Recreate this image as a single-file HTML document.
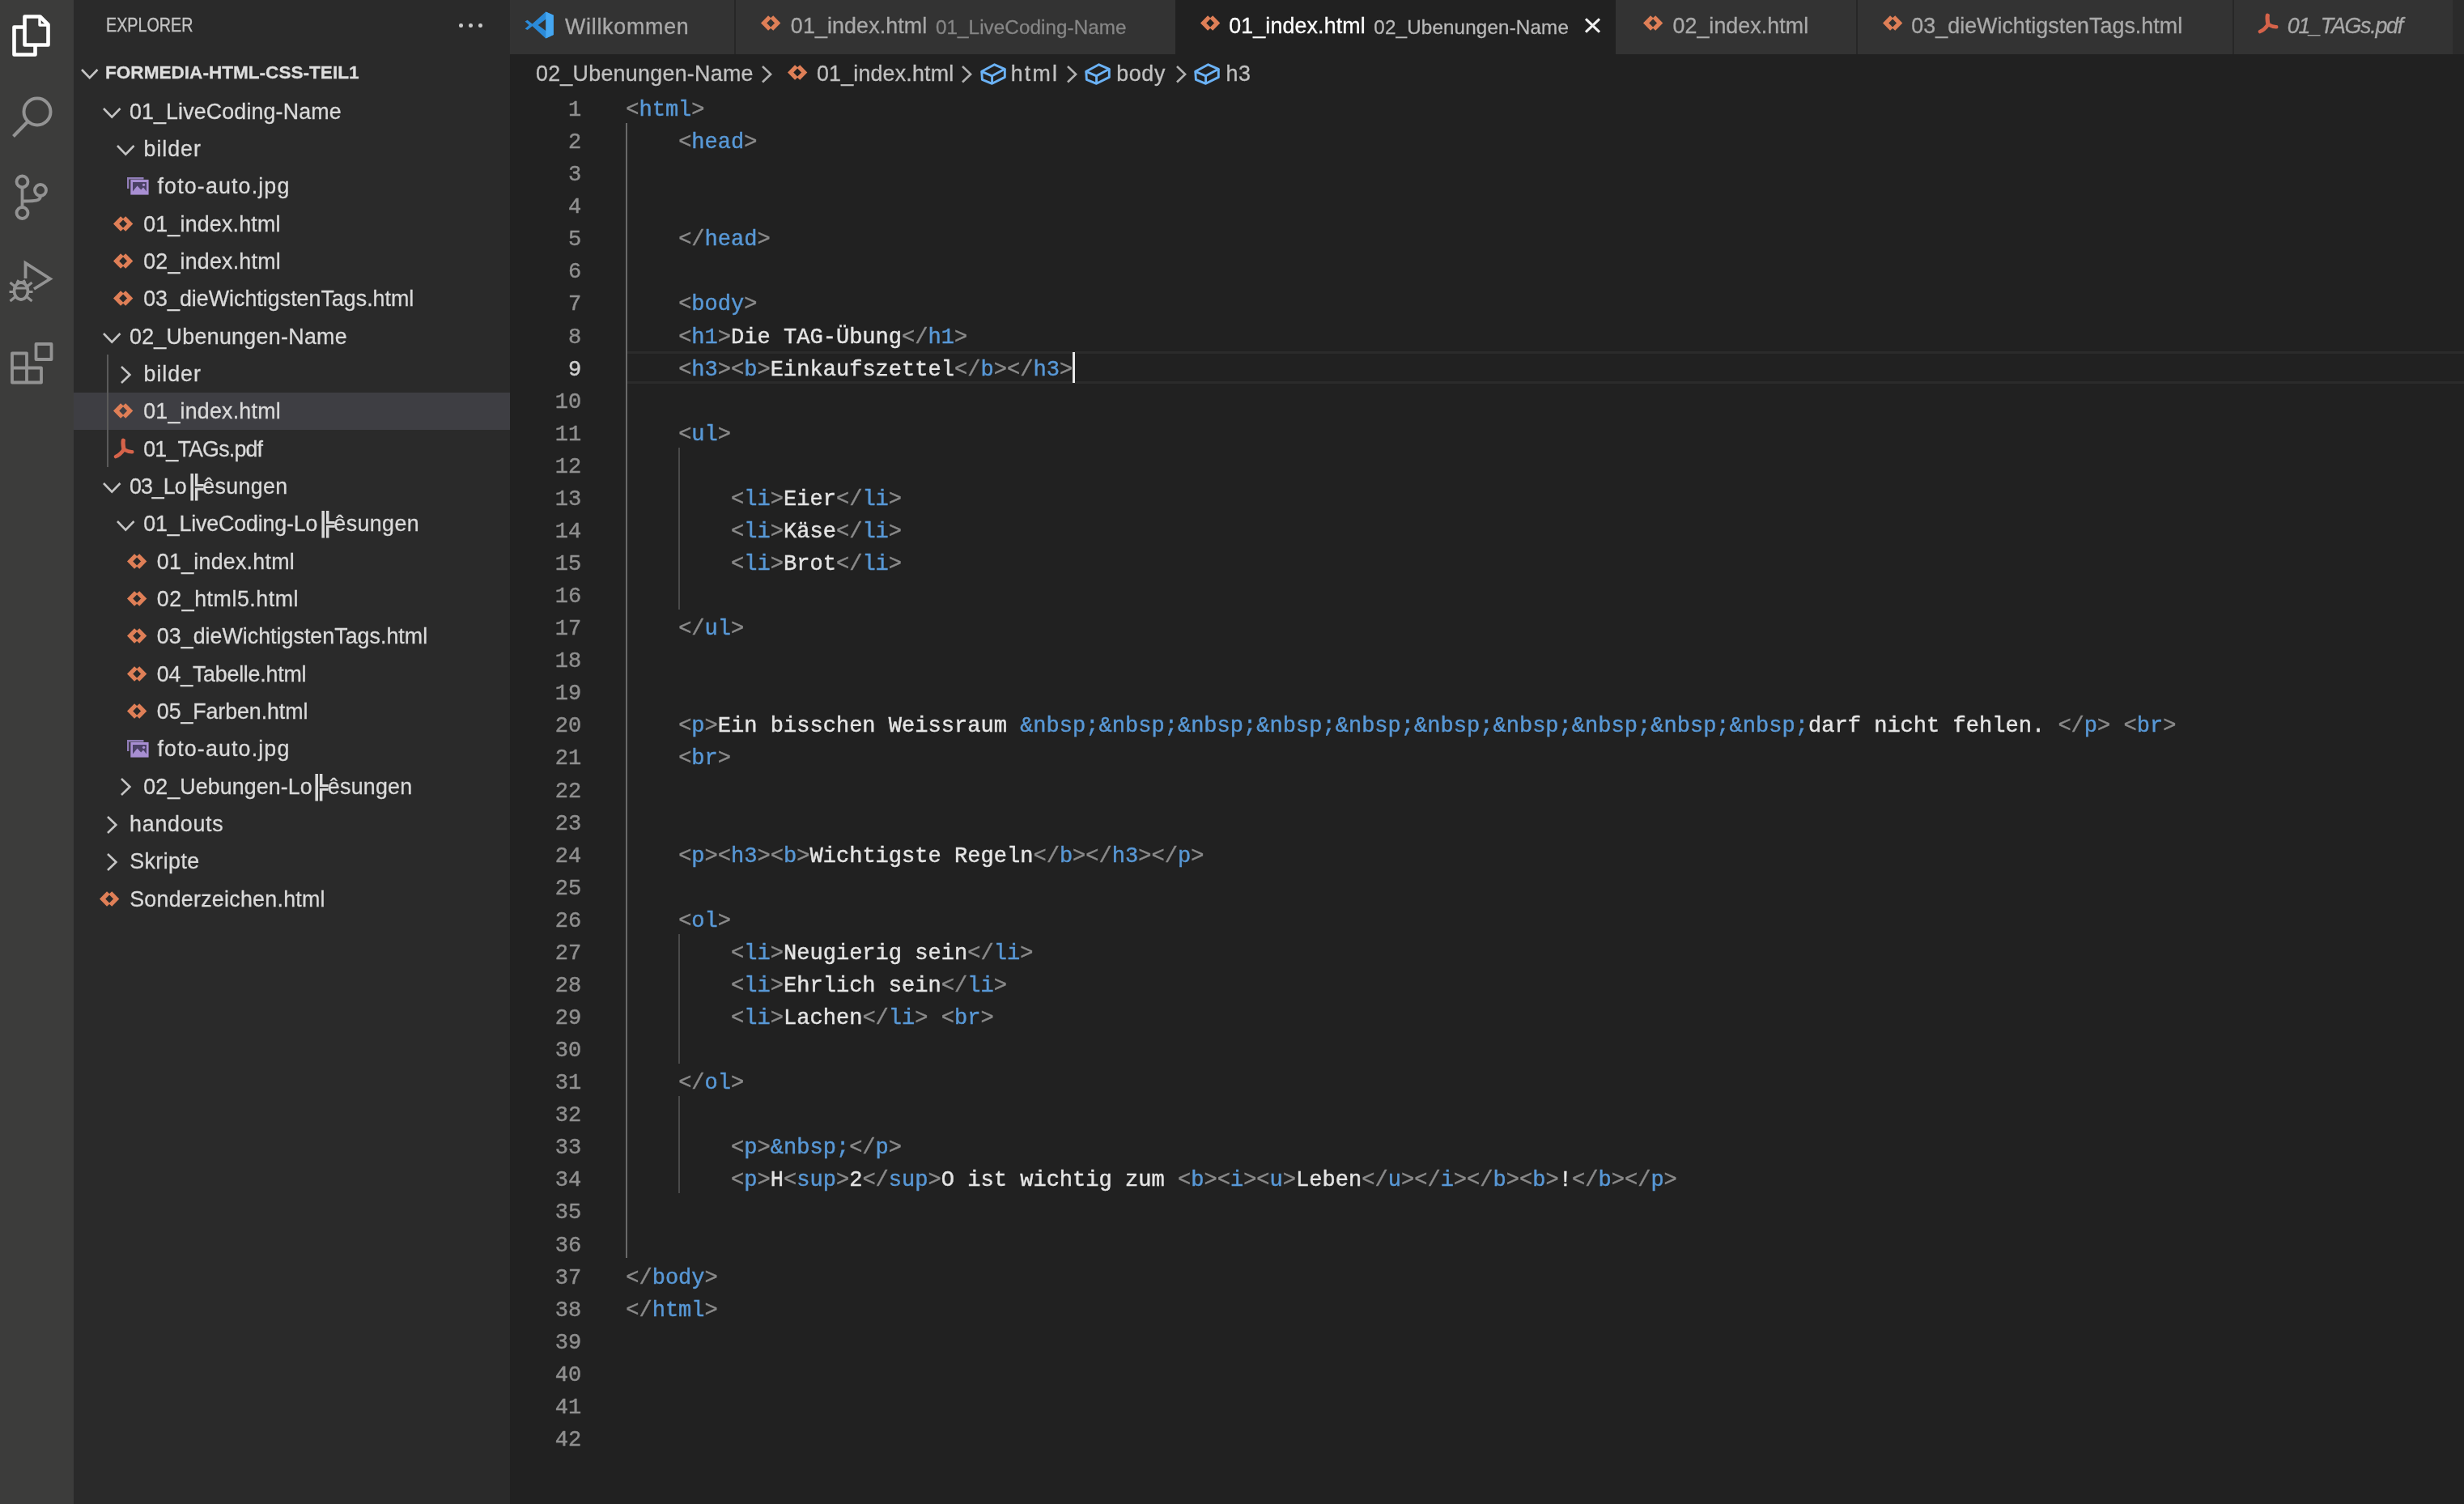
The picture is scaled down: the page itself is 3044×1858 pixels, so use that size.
<!DOCTYPE html>
<html lang="de"><head><meta charset="utf-8"><title>01_index.html - FORMEDIA-HTML-CSS-TEIL1 - Visual Studio Code</title>
<style>
html,body{margin:0;padding:0;background:#212121;overflow:hidden}
#root{position:relative;width:3044px;height:1858px;overflow:hidden;font-family:"Liberation Sans",sans-serif}
#soft{position:absolute;left:0;top:0;width:3044px;height:1858px;filter:blur(0.55px)}
.p,.i,.t,.m{position:absolute}
.i{overflow:visible}
.t{white-space:pre;font-family:"Liberation Sans",sans-serif;-webkit-text-stroke:0.3px currentColor}
.m{white-space:pre;-webkit-text-stroke:0.45px currentColor;font-family:"Liberation Mono",monospace;font-size:27.050px;line-height:40.07px}
.g{color:#8a8a8a}
.b{color:#5898d6}
.bx{position:absolute;display:inline-block;transform-origin:left center;-webkit-text-stroke:1.1px currentColor}
</style></head>
<body><div id="root"><div id="soft">
<div class="p" style="left:-20px;top:-20px;width:3084px;height:1898px;background:#212121"></div>
<div class="p" style="left:-20px;top:-20px;width:110.5px;height:1898px;background:#3c3c3b"></div>
<div class="p" style="left:90.5px;top:-20px;width:539.5px;height:1898px;background:#2a2a2a"></div>
<svg class="i" style="left:12px;top:15px" width="54" height="58" viewBox="0 0 54 58"><g fill="none" stroke="#ffffff" stroke-width="4.6" stroke-linejoin="round"><path d="M18.5 5.5 H37.5 L47.5 15.5 V40.5 H18.5 Z"/><path d="M37 5.5 V16 H47.5" stroke-width="3.4"/><path d="M18.5 18.5 H5.5 V52.5 H31.5 V40.5"/></g></svg>
<svg class="i" style="left:10px;top:114px" width="62" height="62" viewBox="0 0 62 62"><g fill="none" stroke="#939393" stroke-width="4"><circle cx="36" cy="24" r="16.5"/><path d="M24.5 36 L6.5 54.5"/></g></svg>
<svg class="i" style="left:12px;top:210px" width="56" height="68" viewBox="0 0 56 68"><g fill="none" stroke="#939393" stroke-width="3.8"><circle cx="15.5" cy="14.5" r="7"/><circle cx="15.5" cy="53" r="7"/><circle cx="38" cy="25" r="7"/><path d="M15.5 21.5 V46 M38 32 C38 39 30 38.5 15.5 38.5"/></g></svg>
<svg class="i" style="left:8px;top:318px" width="62" height="62" viewBox="0 0 62 62"><g fill="none" stroke="#939393" stroke-width="3.8" stroke-linejoin="miter"><path d="M23.5 26 V7 L54 26.5 L34 39"/><ellipse cx="18" cy="41.5" rx="8.5" ry="10.5"/><path d="M9.5 38 H26.5 M4.5 31 L10 35.5 M31.5 31 L26 35.5 M3.5 42.5 H9.5 M26.5 42.5 H32.5 M4.5 54 L10.5 49 M31.5 54 L25.5 49 M13 31.5 L15 28 M23 31.5 L21 28" stroke-width="3.2"/></g></svg>
<svg class="i" style="left:10px;top:420px" width="60" height="60" viewBox="0 0 60 60"><g fill="none" stroke="#939393" stroke-width="3.8" stroke-linejoin="round"><path d="M5 16.5 H23 V34.5 H41 V52.5 H5 Z M23 34.5 H5 M23 34.5 V52.5"/><rect x="34.5" y="5" width="19" height="19"/></g></svg>
<div class="t" style="left:130.78px;top:17.28px;font-size:23px;line-height:29.9px;color:#c4c4c4;transform:scaleX(0.8576);transform-origin:left center;">EXPLORER</div>
<div class="p" style="left:567.0px;top:29px;width:4.6px;height:4.6px;border-radius:50%;background:#c8c8c8"></div>
<div class="p" style="left:579.2px;top:29px;width:4.6px;height:4.6px;border-radius:50%;background:#c8c8c8"></div>
<div class="p" style="left:591.4px;top:29px;width:4.6px;height:4.6px;border-radius:50%;background:#c8c8c8"></div>
<svg class="i" style="left:97.50px;top:83.43px" width="25.50" height="16.14" viewBox="-3 -3 25.50 16.14"><path d="M0 0 L9.75 10.14 L19.50 0" fill="none" stroke="#c5c5c5" stroke-width="2.7"/></svg>
<div class="t" style="left:129.79px;top:75.48px;font-size:22.8px;line-height:29.64px;color:#dedede;transform:scaleX(0.9902);transform-origin:left center;font-weight:bold;">FORMEDIA-HTML-CSS-TEIL1</div>
<div class="p" style="left:90.5px;top:484.64px;width:539.5px;height:46.33px;background:#3e3e43"></div>
<div class="p" style="left:131.8px;top:438.31px;width:2px;height:138.99px;background:#5a5a5a"></div>
<svg class="i" style="left:124.50px;top:130.97px" width="26.50" height="16.66" viewBox="-3 -3 26.50 16.66"><path d="M0 0 L10.25 10.66 L20.50 0" fill="none" stroke="#c5c5c5" stroke-width="2.6"/></svg>
<div class="t" style="left:0;top:120.59px;font-size:26.8px;line-height:34.84px;color:#dadada"><span style="position:absolute;left:159.95px;letter-spacing:0.142px">01_LiveCoding-Name</span></div>
<svg class="i" style="left:141.50px;top:177.30px" width="26.50" height="16.66" viewBox="-3 -3 26.50 16.66"><path d="M0 0 L10.25 10.66 L20.50 0" fill="none" stroke="#c5c5c5" stroke-width="2.6"/></svg>
<div class="t" style="left:0;top:166.92px;font-size:26.8px;line-height:34.84px;color:#dadada"><span style="position:absolute;left:177.57px;letter-spacing:0.945px">bilder</span></div>
<svg class="i" style="left:156.60px;top:218.96px" width="26.6" height="21.6" viewBox="0 0 26.6 21.6"><path d="M0 0 H20.5 V2.6 H2.4 V14 H0 Z" fill="#8f7cb6"/><rect x="4.3" y="2.9" width="22.3" height="18.7" fill="#a88fd3"/><path d="M7 6 H24 V17.5 L20 12.6 L17.2 15.6 L12.6 10.4 L7 17.5 Z" fill="#4b4166"/><circle cx="20.6" cy="9.3" r="1.6" fill="#a88fd3"/></svg>
<div class="t" style="left:0;top:213.25px;font-size:26.8px;line-height:34.84px;color:#dadada"><span style="position:absolute;left:194.52px;letter-spacing:1.151px">foto-auto.jpg</span></div>
<svg class="i" style="left:140.20px;top:266.79px" width="24.3" height="18.8" viewBox="0 0 23.5 18.8" preserveAspectRatio="none"><path d="M10.6 1.9 L3.5 9.4 L10.6 16.9 M12.9 1.9 L20 9.4 L12.9 16.9" fill="none" stroke="#df7f57" stroke-width="5.1" stroke-linejoin="miter"/></svg>
<div class="t" style="left:0;top:259.58px;font-size:26.8px;line-height:34.84px;color:#dadada"><span style="position:absolute;left:177.15px;letter-spacing:0.207px">01_index.html</span></div>
<svg class="i" style="left:140.20px;top:313.12px" width="24.3" height="18.8" viewBox="0 0 23.5 18.8" preserveAspectRatio="none"><path d="M10.6 1.9 L3.5 9.4 L10.6 16.9 M12.9 1.9 L20 9.4 L12.9 16.9" fill="none" stroke="#df7f57" stroke-width="5.1" stroke-linejoin="miter"/></svg>
<div class="t" style="left:0;top:305.91px;font-size:26.8px;line-height:34.84px;color:#dadada"><span style="position:absolute;left:177.15px;letter-spacing:0.223px">02_index.html</span></div>
<svg class="i" style="left:140.20px;top:359.45px" width="24.3" height="18.8" viewBox="0 0 23.5 18.8" preserveAspectRatio="none"><path d="M10.6 1.9 L3.5 9.4 L10.6 16.9 M12.9 1.9 L20 9.4 L12.9 16.9" fill="none" stroke="#df7f57" stroke-width="5.1" stroke-linejoin="miter"/></svg>
<div class="t" style="left:0;top:352.24px;font-size:26.8px;line-height:34.84px;color:#dadada"><span style="position:absolute;left:177.15px;letter-spacing:0.020px">03_dieWichtigstenTags.html</span></div>
<svg class="i" style="left:124.50px;top:408.95px" width="26.50" height="16.66" viewBox="-3 -3 26.50 16.66"><path d="M0 0 L10.25 10.66 L20.50 0" fill="none" stroke="#c5c5c5" stroke-width="2.6"/></svg>
<div class="t" style="left:0;top:398.57px;font-size:26.8px;line-height:34.84px;color:#dadada"><span style="position:absolute;left:159.95px;letter-spacing:0.314px">02_Ubenungen-Name</span></div>
<svg class="i" style="left:146.50px;top:449.61px" width="16.40" height="26.00" viewBox="-3 -3 16.40 26.00"><path d="M0 0 L10.40 10.00 L0 20.00" fill="none" stroke="#c5c5c5" stroke-width="2.6"/></svg>
<div class="t" style="left:0;top:444.90px;font-size:26.8px;line-height:34.84px;color:#dadada"><span style="position:absolute;left:177.57px;letter-spacing:0.945px">bilder</span></div>
<svg class="i" style="left:140.20px;top:498.44px" width="24.3" height="18.8" viewBox="0 0 23.5 18.8" preserveAspectRatio="none"><path d="M10.6 1.9 L3.5 9.4 L10.6 16.9 M12.9 1.9 L20 9.4 L12.9 16.9" fill="none" stroke="#df7f57" stroke-width="5.1" stroke-linejoin="miter"/></svg>
<div class="t" style="left:0;top:491.23px;font-size:26.8px;line-height:34.84px;color:#dadada"><span style="position:absolute;left:177.15px;letter-spacing:0.223px">01_index.html</span></div>
<svg class="i" style="left:139.80px;top:540.97px" width="26" height="26" viewBox="0 0 26 26"><g fill="none" stroke="#d6634a" stroke-linecap="round" stroke-linejoin="round"><path d="M12.3 3.2 C11.6 6.5 12.4 10.5 13 14.3" stroke-width="5.2"/><path d="M13 14.3 C10 18.5 6.5 21.5 3 23" stroke-width="4.6"/><path d="M13 14.3 C16.5 16.2 20 17.3 23.2 17.2" stroke-width="4.6"/></g></svg>
<div class="t" style="left:0;top:537.56px;font-size:26.8px;line-height:34.84px;color:#dadada"><span style="position:absolute;left:177.15px;letter-spacing:-0.800px">01_TAGs.pdf</span></div>
<svg class="i" style="left:124.50px;top:594.27px" width="26.50" height="16.66" viewBox="-3 -3 26.50 16.66"><path d="M0 0 L10.25 10.66 L20.50 0" fill="none" stroke="#c5c5c5" stroke-width="2.6"/></svg>
<div class="t" style="left:0;top:583.89px;font-size:26.8px;line-height:34.84px;color:#dadada"><span style="position:absolute;left:159.95px;letter-spacing:-0.963px">03_Lo</span><span class="bx" style="left:229.08px;transform:scaleX(1.15)">╠</span><span style="position:absolute;left:250.36px;letter-spacing:0.325px">êsungen</span></div>
<svg class="i" style="left:141.50px;top:640.60px" width="26.50" height="16.66" viewBox="-3 -3 26.50 16.66"><path d="M0 0 L10.25 10.66 L20.50 0" fill="none" stroke="#c5c5c5" stroke-width="2.6"/></svg>
<div class="t" style="left:0;top:630.22px;font-size:26.8px;line-height:34.84px;color:#dadada"><span style="position:absolute;left:177.15px;letter-spacing:-0.151px">01_LiveCoding-Lo</span><span class="bx" style="left:390.88px;transform:scaleX(1.15)">╠</span><span style="position:absolute;left:412.36px;letter-spacing:0.408px">êsungen</span></div>
<svg class="i" style="left:157.20px;top:683.76px" width="24.3" height="18.8" viewBox="0 0 23.5 18.8" preserveAspectRatio="none"><path d="M10.6 1.9 L3.5 9.4 L10.6 16.9 M12.9 1.9 L20 9.4 L12.9 16.9" fill="none" stroke="#df7f57" stroke-width="5.1" stroke-linejoin="miter"/></svg>
<div class="t" style="left:0;top:676.55px;font-size:26.8px;line-height:34.84px;color:#dadada"><span style="position:absolute;left:193.85px;letter-spacing:0.248px">01_index.html</span></div>
<svg class="i" style="left:157.20px;top:730.09px" width="24.3" height="18.8" viewBox="0 0 23.5 18.8" preserveAspectRatio="none"><path d="M10.6 1.9 L3.5 9.4 L10.6 16.9 M12.9 1.9 L20 9.4 L12.9 16.9" fill="none" stroke="#df7f57" stroke-width="5.1" stroke-linejoin="miter"/></svg>
<div class="t" style="left:0;top:722.88px;font-size:26.8px;line-height:34.84px;color:#dadada"><span style="position:absolute;left:193.85px;letter-spacing:0.535px">02_html5.html</span></div>
<svg class="i" style="left:157.20px;top:776.42px" width="24.3" height="18.8" viewBox="0 0 23.5 18.8" preserveAspectRatio="none"><path d="M10.6 1.9 L3.5 9.4 L10.6 16.9 M12.9 1.9 L20 9.4 L12.9 16.9" fill="none" stroke="#df7f57" stroke-width="5.1" stroke-linejoin="miter"/></svg>
<div class="t" style="left:0;top:769.21px;font-size:26.8px;line-height:34.84px;color:#dadada"><span style="position:absolute;left:193.85px;letter-spacing:0.024px">03_dieWichtigstenTags.html</span></div>
<svg class="i" style="left:157.20px;top:822.75px" width="24.3" height="18.8" viewBox="0 0 23.5 18.8" preserveAspectRatio="none"><path d="M10.6 1.9 L3.5 9.4 L10.6 16.9 M12.9 1.9 L20 9.4 L12.9 16.9" fill="none" stroke="#df7f57" stroke-width="5.1" stroke-linejoin="miter"/></svg>
<div class="t" style="left:0;top:815.54px;font-size:26.8px;line-height:34.84px;color:#dadada"><span style="position:absolute;left:193.85px;letter-spacing:-0.218px">04_Tabelle.html</span></div>
<svg class="i" style="left:157.20px;top:869.08px" width="24.3" height="18.8" viewBox="0 0 23.5 18.8" preserveAspectRatio="none"><path d="M10.6 1.9 L3.5 9.4 L10.6 16.9 M12.9 1.9 L20 9.4 L12.9 16.9" fill="none" stroke="#df7f57" stroke-width="5.1" stroke-linejoin="miter"/></svg>
<div class="t" style="left:0;top:861.87px;font-size:26.8px;line-height:34.84px;color:#dadada"><span style="position:absolute;left:193.85px;letter-spacing:-0.090px">05_Farben.html</span></div>
<svg class="i" style="left:156.60px;top:913.91px" width="26.6" height="21.6" viewBox="0 0 26.6 21.6"><path d="M0 0 H20.5 V2.6 H2.4 V14 H0 Z" fill="#8f7cb6"/><rect x="4.3" y="2.9" width="22.3" height="18.7" fill="#a88fd3"/><path d="M7 6 H24 V17.5 L20 12.6 L17.2 15.6 L12.6 10.4 L7 17.5 Z" fill="#4b4166"/><circle cx="20.6" cy="9.3" r="1.6" fill="#a88fd3"/></svg>
<div class="t" style="left:0;top:908.20px;font-size:26.8px;line-height:34.84px;color:#dadada"><span style="position:absolute;left:194.52px;letter-spacing:1.151px">foto-auto.jpg</span></div>
<svg class="i" style="left:146.50px;top:959.24px" width="16.40" height="26.00" viewBox="-3 -3 16.40 26.00"><path d="M0 0 L10.40 10.00 L0 20.00" fill="none" stroke="#c5c5c5" stroke-width="2.6"/></svg>
<div class="t" style="left:0;top:954.53px;font-size:26.8px;line-height:34.84px;color:#dadada"><span style="position:absolute;left:177.15px;letter-spacing:0.110px">02_Uebungen-Lo</span><span class="bx" style="left:383.48px;transform:scaleX(1.15)">╠</span><span style="position:absolute;left:404.86px;letter-spacing:0.242px">êsungen</span></div>
<svg class="i" style="left:129.50px;top:1005.57px" width="16.40" height="26.00" viewBox="-3 -3 16.40 26.00"><path d="M0 0 L10.40 10.00 L0 20.00" fill="none" stroke="#c5c5c5" stroke-width="2.6"/></svg>
<div class="t" style="left:0;top:1000.86px;font-size:26.8px;line-height:34.84px;color:#dadada"><span style="position:absolute;left:160.04px;letter-spacing:0.779px">handouts</span></div>
<svg class="i" style="left:129.50px;top:1051.90px" width="16.40" height="26.00" viewBox="-3 -3 16.40 26.00"><path d="M0 0 L10.40 10.00 L0 20.00" fill="none" stroke="#c5c5c5" stroke-width="2.6"/></svg>
<div class="t" style="left:0;top:1047.19px;font-size:26.8px;line-height:34.84px;color:#dadada"><span style="position:absolute;left:160.18px;letter-spacing:0.450px">Skripte</span></div>
<svg class="i" style="left:123.20px;top:1100.73px" width="24.3" height="18.8" viewBox="0 0 23.5 18.8" preserveAspectRatio="none"><path d="M10.6 1.9 L3.5 9.4 L10.6 16.9 M12.9 1.9 L20 9.4 L12.9 16.9" fill="none" stroke="#df7f57" stroke-width="5.1" stroke-linejoin="miter"/></svg>
<div class="t" style="left:0;top:1093.52px;font-size:26.8px;line-height:34.84px;color:#dadada"><span style="position:absolute;left:160.18px;letter-spacing:0.267px">Sonderzeichen.html</span></div>
<div class="p" style="left:630px;top:-20px;width:2434px;height:87.4px;background:#2b2b2b"></div>
<div class="p" style="left:630px;top:-20px;width:278.0px;height:87.4px;background:#333333"></div>
<div class="p" style="left:908px;top:-20px;width:544.4px;height:87.4px;background:#333333"></div>
<div class="p" style="left:1452.4px;top:-20px;width:543.8px;height:87.4px;background:#212121"></div>
<div class="p" style="left:1996.2px;top:-20px;width:298.2px;height:87.4px;background:#333333"></div>
<div class="p" style="left:2294.4px;top:-20px;width:464.3px;height:87.4px;background:#333333"></div>
<div class="p" style="left:2758.7px;top:-20px;width:271.3px;height:87.4px;background:#333333"></div>
<div class="p" style="left:907.0px;top:-20px;width:2px;height:87.4px;background:#272727"></div>
<div class="p" style="left:2293.4px;top:-20px;width:2px;height:87.4px;background:#272727"></div>
<div class="p" style="left:2757.7px;top:-20px;width:2px;height:87.4px;background:#272727"></div>
<svg class="i" style="left:648.3px;top:14.3px" width="36.2" height="33.8" viewBox="0 0 36.2 33.8"><path d="M26.3 0.4 L35.8 4.8 V29 L26.3 33.4 L9.6 18.2 L3.6 23 L0.6 21.4 L5.6 16.9 L0.6 12.4 L3.6 10.8 L9.6 15.6 Z M26.6 9.6 L16.8 16.9 L26.6 24.2 Z" fill="#2b8ad8" fill-rule="evenodd"/><path d="M26.3 0.4 L35.8 4.8 V29 L26.3 33.4 Z" fill="#45a7f2"/></svg>
<div class="t" style="left:697.88px;top:15.59px;font-size:26.8px;line-height:34.84px;color:#a9a9a9;letter-spacing:0.771px;">Willkommen</div>
<svg class="i" style="left:940.40px;top:19.20px" width="24.3" height="18.8" viewBox="0 0 23.5 18.8" preserveAspectRatio="none"><path d="M10.6 1.9 L3.5 9.4 L10.6 16.9 M12.9 1.9 L20 9.4 L12.9 16.9" fill="none" stroke="#df7f57" stroke-width="5.1" stroke-linejoin="miter"/></svg>
<div class="t" style="left:976.85px;top:15.19px;font-size:26.8px;line-height:34.84px;color:#a9a9a9;letter-spacing:0.132px;">01_index.html</div>
<div class="t" style="left:1155.95px;top:17.78px;font-size:24.2px;line-height:31.46px;color:#868686;letter-spacing:0.097px;">01_LiveCoding-Name</div>
<svg class="i" style="left:1482.80px;top:19.20px" width="24.3" height="18.8" viewBox="0 0 23.5 18.8" preserveAspectRatio="none"><path d="M10.6 1.9 L3.5 9.4 L10.6 16.9 M12.9 1.9 L20 9.4 L12.9 16.9" fill="none" stroke="#df7f57" stroke-width="5.1" stroke-linejoin="miter"/></svg>
<div class="t" style="left:1518.25px;top:15.19px;font-size:26.8px;line-height:34.84px;color:#ffffff;letter-spacing:0.132px;">01_index.html</div>
<div class="t" style="left:1697.35px;top:17.78px;font-size:24.2px;line-height:31.46px;color:#b9b9b9;letter-spacing:0.155px;">02_Ubenungen-Name</div>
<svg class="i" style="left:1955px;top:19px" width="25" height="25" viewBox="0 0 25 25"><path d="M4 4.3 L21 20.7 M21 4.3 L4 20.7" stroke="#f0f0f0" stroke-width="3.1" fill="none"/></svg>
<svg class="i" style="left:2030.20px;top:19.20px" width="24.3" height="18.8" viewBox="0 0 23.5 18.8" preserveAspectRatio="none"><path d="M10.6 1.9 L3.5 9.4 L10.6 16.9 M12.9 1.9 L20 9.4 L12.9 16.9" fill="none" stroke="#df7f57" stroke-width="5.1" stroke-linejoin="miter"/></svg>
<div class="t" style="left:2066.45px;top:15.19px;font-size:26.8px;line-height:34.84px;color:#a9a9a9;letter-spacing:0.073px;">02_index.html</div>
<svg class="i" style="left:2325.90px;top:19.20px" width="24.3" height="18.8" viewBox="0 0 23.5 18.8" preserveAspectRatio="none"><path d="M10.6 1.9 L3.5 9.4 L10.6 16.9 M12.9 1.9 L20 9.4 L12.9 16.9" fill="none" stroke="#df7f57" stroke-width="5.1" stroke-linejoin="miter"/></svg>
<div class="t" style="left:2361.35px;top:15.19px;font-size:26.8px;line-height:34.84px;color:#a9a9a9;letter-spacing:0.044px;">03_dieWichtigstenTags.html</div>
<svg class="i" style="left:2788.50px;top:15.80px" width="26" height="26" viewBox="0 0 26 26"><g fill="none" stroke="#d6634a" stroke-linecap="round" stroke-linejoin="round"><path d="M12.3 3.2 C11.6 6.5 12.4 10.5 13 14.3" stroke-width="5.2"/><path d="M13 14.3 C10 18.5 6.5 21.5 3 23" stroke-width="4.6"/><path d="M13 14.3 C16.5 16.2 20 17.3 23.2 17.2" stroke-width="4.6"/></g></svg>
<div class="t" style="left:2825.84px;top:15.19px;font-size:26.8px;line-height:34.84px;color:#a9a9a9;letter-spacing:-1.256px;font-style:italic;">01_TAGs.pdf</div>
<div class="t" style="left:661.95px;top:73.69px;font-size:26.8px;line-height:34.84px;color:#c0c0c0;letter-spacing:0.301px;">02_Ubenungen-Name</div>
<svg class="i" style="left:939.13px;top:78.55px" width="16.14" height="25.50" viewBox="-3 -3 16.14 25.50"><path d="M0 0 L10.14 9.75 L0 19.50" fill="none" stroke="#b0b0b0" stroke-width="2.6"/></svg>
<svg class="i" style="left:972.60px;top:79.80px" width="24.3" height="18.8" viewBox="0 0 23.5 18.8" preserveAspectRatio="none"><path d="M10.6 1.9 L3.5 9.4 L10.6 16.9 M12.9 1.9 L20 9.4 L12.9 16.9" fill="none" stroke="#df7f57" stroke-width="5.1" stroke-linejoin="miter"/></svg>
<div class="t" style="left:1008.95px;top:73.69px;font-size:26.8px;line-height:34.84px;color:#c0c0c0;letter-spacing:0.198px;">01_index.html</div>
<svg class="i" style="left:1186.13px;top:78.55px" width="16.14" height="25.50" viewBox="-3 -3 16.14 25.50"><path d="M0 0 L10.14 9.75 L0 19.50" fill="none" stroke="#b0b0b0" stroke-width="2.6"/></svg>
<svg class="i" style="left:1211.20px;top:77.50px" width="32" height="27" viewBox="0 0 32 27"><g fill="none" stroke="#6bb2f5" stroke-width="2.9" stroke-linejoin="round"><path d="M1.8 10.3 L17.6 1.8 L30.3 7.3 L14.6 15.8 Z"/><path d="M14.6 15.8 V25.3 M1.8 10.3 L2.4 20.4 L14.6 25.3 L30.3 17.4 V7.3"/></g></svg>
<div class="t" style="left:1248.74px;top:73.69px;font-size:26.8px;line-height:34.84px;color:#c0c0c0;letter-spacing:2.207px;">html</div>
<svg class="i" style="left:1315.93px;top:78.55px" width="16.14" height="25.50" viewBox="-3 -3 16.14 25.50"><path d="M0 0 L10.14 9.75 L0 19.50" fill="none" stroke="#b0b0b0" stroke-width="2.6"/></svg>
<svg class="i" style="left:1339.80px;top:77.50px" width="32" height="27" viewBox="0 0 32 27"><g fill="none" stroke="#6bb2f5" stroke-width="2.9" stroke-linejoin="round"><path d="M1.8 10.3 L17.6 1.8 L30.3 7.3 L14.6 15.8 Z"/><path d="M14.6 15.8 V25.3 M1.8 10.3 L2.4 20.4 L14.6 25.3 L30.3 17.4 V7.3"/></g></svg>
<div class="t" style="left:1379.17px;top:73.69px;font-size:26.8px;line-height:34.84px;color:#c0c0c0;letter-spacing:0.688px;">body</div>
<svg class="i" style="left:1450.93px;top:78.55px" width="16.14" height="25.50" viewBox="-3 -3 16.14 25.50"><path d="M0 0 L10.14 9.75 L0 19.50" fill="none" stroke="#b0b0b0" stroke-width="2.6"/></svg>
<svg class="i" style="left:1474.80px;top:77.50px" width="32" height="27" viewBox="0 0 32 27"><g fill="none" stroke="#6bb2f5" stroke-width="2.9" stroke-linejoin="round"><path d="M1.8 10.3 L17.6 1.8 L30.3 7.3 L14.6 15.8 Z"/><path d="M14.6 15.8 V25.3 M1.8 10.3 L2.4 20.4 L14.6 25.3 L30.3 17.4 V7.3"/></g></svg>
<div class="t" style="left:1514.54px;top:73.69px;font-size:26.8px;line-height:34.84px;color:#c0c0c0;letter-spacing:0.526px;">h3</div>
<div class="p" style="left:775px;top:433.66px;width:2289px;height:40.07px;box-sizing:border-box;border-top:3.4px solid #2b2b2b;border-bottom:3.4px solid #2b2b2b;"></div>
<div class="p" style="left:772.70px;top:151.97px;width:2.1px;height:1402.45px;background:#696969"></div>
<div class="p" style="left:837.63px;top:552.67px;width:2.1px;height:200.35px;background:#4a4a4a"></div>
<div class="p" style="left:837.63px;top:1153.72px;width:2.1px;height:160.28px;background:#4a4a4a"></div>
<div class="p" style="left:837.63px;top:1354.07px;width:2.1px;height:120.21px;background:#4a4a4a"></div>
<div class="m" style="left:640px;width:78.3px;text-align:right;top:116.07px;color:#8f8f8f">1</div>
<div class="m" style="left:773.20px;top:116.07px;color:#e4e4e4"><span class="g">&lt;</span><span class="b">html</span><span class="g">&gt;</span></div>
<div class="m" style="left:640px;width:78.3px;text-align:right;top:156.14px;color:#8f8f8f">2</div>
<div class="m" style="left:838.13px;top:156.14px;color:#e4e4e4"><span class="g">&lt;</span><span class="b">head</span><span class="g">&gt;</span></div>
<div class="m" style="left:640px;width:78.3px;text-align:right;top:196.21px;color:#8f8f8f">3</div>
<div class="m" style="left:640px;width:78.3px;text-align:right;top:236.28px;color:#8f8f8f">4</div>
<div class="m" style="left:640px;width:78.3px;text-align:right;top:276.35px;color:#8f8f8f">5</div>
<div class="m" style="left:838.13px;top:276.35px;color:#e4e4e4"><span class="g">&lt;/</span><span class="b">head</span><span class="g">&gt;</span></div>
<div class="m" style="left:640px;width:78.3px;text-align:right;top:316.42px;color:#8f8f8f">6</div>
<div class="m" style="left:640px;width:78.3px;text-align:right;top:356.49px;color:#8f8f8f">7</div>
<div class="m" style="left:838.13px;top:356.49px;color:#e4e4e4"><span class="g">&lt;</span><span class="b">body</span><span class="g">&gt;</span></div>
<div class="m" style="left:640px;width:78.3px;text-align:right;top:396.56px;color:#8f8f8f">8</div>
<div class="m" style="left:838.13px;top:396.56px;color:#e4e4e4"><span class="g">&lt;</span><span class="b">h1</span><span class="g">&gt;</span>Die TAG-Übung<span class="g">&lt;/</span><span class="b">h1</span><span class="g">&gt;</span></div>
<div class="m" style="left:640px;width:78.3px;text-align:right;top:436.63px;color:#cfcfcf">9</div>
<div class="m" style="left:838.13px;top:436.63px;color:#e4e4e4"><span class="g">&lt;</span><span class="b">h3</span><span class="g">&gt;</span><span class="g">&lt;</span><span class="b">b</span><span class="g">&gt;</span>Einkaufszettel<span class="g">&lt;/</span><span class="b">b</span><span class="g">&gt;</span><span class="g">&lt;/</span><span class="b">h3</span><span class="g">&gt;</span></div>
<div class="m" style="left:640px;width:78.3px;text-align:right;top:476.70px;color:#8f8f8f">10</div>
<div class="m" style="left:640px;width:78.3px;text-align:right;top:516.77px;color:#8f8f8f">11</div>
<div class="m" style="left:838.13px;top:516.77px;color:#e4e4e4"><span class="g">&lt;</span><span class="b">ul</span><span class="g">&gt;</span></div>
<div class="m" style="left:640px;width:78.3px;text-align:right;top:556.84px;color:#8f8f8f">12</div>
<div class="m" style="left:640px;width:78.3px;text-align:right;top:596.91px;color:#8f8f8f">13</div>
<div class="m" style="left:903.06px;top:596.91px;color:#e4e4e4"><span class="g">&lt;</span><span class="b">li</span><span class="g">&gt;</span>Eier<span class="g">&lt;/</span><span class="b">li</span><span class="g">&gt;</span></div>
<div class="m" style="left:640px;width:78.3px;text-align:right;top:636.98px;color:#8f8f8f">14</div>
<div class="m" style="left:903.06px;top:636.98px;color:#e4e4e4"><span class="g">&lt;</span><span class="b">li</span><span class="g">&gt;</span>Käse<span class="g">&lt;/</span><span class="b">li</span><span class="g">&gt;</span></div>
<div class="m" style="left:640px;width:78.3px;text-align:right;top:677.05px;color:#8f8f8f">15</div>
<div class="m" style="left:903.06px;top:677.05px;color:#e4e4e4"><span class="g">&lt;</span><span class="b">li</span><span class="g">&gt;</span>Brot<span class="g">&lt;/</span><span class="b">li</span><span class="g">&gt;</span></div>
<div class="m" style="left:640px;width:78.3px;text-align:right;top:717.12px;color:#8f8f8f">16</div>
<div class="m" style="left:640px;width:78.3px;text-align:right;top:757.19px;color:#8f8f8f">17</div>
<div class="m" style="left:838.13px;top:757.19px;color:#e4e4e4"><span class="g">&lt;/</span><span class="b">ul</span><span class="g">&gt;</span></div>
<div class="m" style="left:640px;width:78.3px;text-align:right;top:797.26px;color:#8f8f8f">18</div>
<div class="m" style="left:640px;width:78.3px;text-align:right;top:837.33px;color:#8f8f8f">19</div>
<div class="m" style="left:640px;width:78.3px;text-align:right;top:877.40px;color:#8f8f8f">20</div>
<div class="m" style="left:838.13px;top:877.40px;color:#e4e4e4"><span class="g">&lt;</span><span class="b">p</span><span class="g">&gt;</span>Ein bisschen Weissraum <span class="b">&amp;nbsp;&amp;nbsp;&amp;nbsp;&amp;nbsp;&amp;nbsp;&amp;nbsp;&amp;nbsp;&amp;nbsp;&amp;nbsp;&amp;nbsp;</span>darf nicht fehlen. <span class="g">&lt;/</span><span class="b">p</span><span class="g">&gt;</span> <span class="g">&lt;</span><span class="b">br</span><span class="g">&gt;</span></div>
<div class="m" style="left:640px;width:78.3px;text-align:right;top:917.47px;color:#8f8f8f">21</div>
<div class="m" style="left:838.13px;top:917.47px;color:#e4e4e4"><span class="g">&lt;</span><span class="b">br</span><span class="g">&gt;</span></div>
<div class="m" style="left:640px;width:78.3px;text-align:right;top:957.54px;color:#8f8f8f">22</div>
<div class="m" style="left:640px;width:78.3px;text-align:right;top:997.61px;color:#8f8f8f">23</div>
<div class="m" style="left:640px;width:78.3px;text-align:right;top:1037.68px;color:#8f8f8f">24</div>
<div class="m" style="left:838.13px;top:1037.68px;color:#e4e4e4"><span class="g">&lt;</span><span class="b">p</span><span class="g">&gt;</span><span class="g">&lt;</span><span class="b">h3</span><span class="g">&gt;</span><span class="g">&lt;</span><span class="b">b</span><span class="g">&gt;</span>Wichtigste Regeln<span class="g">&lt;/</span><span class="b">b</span><span class="g">&gt;</span><span class="g">&lt;/</span><span class="b">h3</span><span class="g">&gt;</span><span class="g">&lt;/</span><span class="b">p</span><span class="g">&gt;</span></div>
<div class="m" style="left:640px;width:78.3px;text-align:right;top:1077.75px;color:#8f8f8f">25</div>
<div class="m" style="left:640px;width:78.3px;text-align:right;top:1117.82px;color:#8f8f8f">26</div>
<div class="m" style="left:838.13px;top:1117.82px;color:#e4e4e4"><span class="g">&lt;</span><span class="b">ol</span><span class="g">&gt;</span></div>
<div class="m" style="left:640px;width:78.3px;text-align:right;top:1157.89px;color:#8f8f8f">27</div>
<div class="m" style="left:903.06px;top:1157.89px;color:#e4e4e4"><span class="g">&lt;</span><span class="b">li</span><span class="g">&gt;</span>Neugierig sein<span class="g">&lt;/</span><span class="b">li</span><span class="g">&gt;</span></div>
<div class="m" style="left:640px;width:78.3px;text-align:right;top:1197.96px;color:#8f8f8f">28</div>
<div class="m" style="left:903.06px;top:1197.96px;color:#e4e4e4"><span class="g">&lt;</span><span class="b">li</span><span class="g">&gt;</span>Ehrlich sein<span class="g">&lt;/</span><span class="b">li</span><span class="g">&gt;</span></div>
<div class="m" style="left:640px;width:78.3px;text-align:right;top:1238.03px;color:#8f8f8f">29</div>
<div class="m" style="left:903.06px;top:1238.03px;color:#e4e4e4"><span class="g">&lt;</span><span class="b">li</span><span class="g">&gt;</span>Lachen<span class="g">&lt;/</span><span class="b">li</span><span class="g">&gt;</span> <span class="g">&lt;</span><span class="b">br</span><span class="g">&gt;</span></div>
<div class="m" style="left:640px;width:78.3px;text-align:right;top:1278.10px;color:#8f8f8f">30</div>
<div class="m" style="left:640px;width:78.3px;text-align:right;top:1318.17px;color:#8f8f8f">31</div>
<div class="m" style="left:838.13px;top:1318.17px;color:#e4e4e4"><span class="g">&lt;/</span><span class="b">ol</span><span class="g">&gt;</span></div>
<div class="m" style="left:640px;width:78.3px;text-align:right;top:1358.24px;color:#8f8f8f">32</div>
<div class="m" style="left:640px;width:78.3px;text-align:right;top:1398.31px;color:#8f8f8f">33</div>
<div class="m" style="left:903.06px;top:1398.31px;color:#e4e4e4"><span class="g">&lt;</span><span class="b">p</span><span class="g">&gt;</span><span class="b">&amp;nbsp;</span><span class="g">&lt;/</span><span class="b">p</span><span class="g">&gt;</span></div>
<div class="m" style="left:640px;width:78.3px;text-align:right;top:1438.38px;color:#8f8f8f">34</div>
<div class="m" style="left:903.06px;top:1438.38px;color:#e4e4e4"><span class="g">&lt;</span><span class="b">p</span><span class="g">&gt;</span>H<span class="g">&lt;</span><span class="b">sup</span><span class="g">&gt;</span>2<span class="g">&lt;/</span><span class="b">sup</span><span class="g">&gt;</span>O ist wichtig zum <span class="g">&lt;</span><span class="b">b</span><span class="g">&gt;</span><span class="g">&lt;</span><span class="b">i</span><span class="g">&gt;</span><span class="g">&lt;</span><span class="b">u</span><span class="g">&gt;</span>Leben<span class="g">&lt;/</span><span class="b">u</span><span class="g">&gt;</span><span class="g">&lt;/</span><span class="b">i</span><span class="g">&gt;</span><span class="g">&lt;/</span><span class="b">b</span><span class="g">&gt;</span><span class="g">&lt;</span><span class="b">b</span><span class="g">&gt;</span>!<span class="g">&lt;/</span><span class="b">b</span><span class="g">&gt;</span><span class="g">&lt;/</span><span class="b">p</span><span class="g">&gt;</span></div>
<div class="m" style="left:640px;width:78.3px;text-align:right;top:1478.45px;color:#8f8f8f">35</div>
<div class="m" style="left:640px;width:78.3px;text-align:right;top:1518.52px;color:#8f8f8f">36</div>
<div class="m" style="left:640px;width:78.3px;text-align:right;top:1558.59px;color:#8f8f8f">37</div>
<div class="m" style="left:773.20px;top:1558.59px;color:#e4e4e4"><span class="g">&lt;/</span><span class="b">body</span><span class="g">&gt;</span></div>
<div class="m" style="left:640px;width:78.3px;text-align:right;top:1598.66px;color:#8f8f8f">38</div>
<div class="m" style="left:773.20px;top:1598.66px;color:#e4e4e4"><span class="g">&lt;/</span><span class="b">html</span><span class="g">&gt;</span></div>
<div class="m" style="left:640px;width:78.3px;text-align:right;top:1638.73px;color:#8f8f8f">39</div>
<div class="m" style="left:640px;width:78.3px;text-align:right;top:1678.80px;color:#8f8f8f">40</div>
<div class="m" style="left:640px;width:78.3px;text-align:right;top:1718.87px;color:#8f8f8f">41</div>
<div class="m" style="left:640px;width:78.3px;text-align:right;top:1758.94px;color:#8f8f8f">42</div>
<div class="p" style="left:1324.61px;top:434.66px;width:3.6px;height:38.07px;background:#e8e8e8"></div>
</div></div></body></html>
